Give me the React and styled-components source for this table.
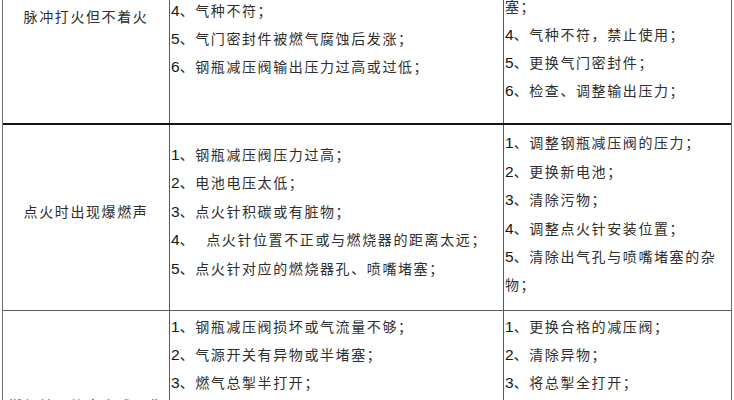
import React from 'react'
import styled, { createGlobalStyle } from 'styled-components'

const GlobalStyle = createGlobalStyle`
  html, body {
    margin: 0;
    padding: 0;
    background: #fff;
    overflow: hidden;
  }
  body {
    font-family: "Liberation Sans", "Noto Sans CJK SC", sans-serif;
  }
`

const rows = [
  {
    fault: '脉冲打火但不着火',
    faultTop: 4,
    causeShift: -3,
    fixShift: -6,
    lineHeight: 27,
    causes: ['4、气种不符；', '5、气门密封件被燃气腐蚀后发涨；', '6、钢瓶减压阀输出压力过高或过低；'],
    fixes: ['塞；', '4、气种不符，禁止使用；', '5、更换气门密封件；', '6、检查、调整输出压力；'],
    height: 123,
    border: 'thick',
  },
  {
    fault: '点火时出现爆燃声',
    centered: true,
    causeShift: 0,
    fixShift: 4,
    lineHeight: 27.5,
    causes: [
      '1、钢瓶减压阀压力过高；',
      '2、电池电压太低；',
      '3、点火针积碳或有脏物；',
      '4、\u00a0\u00a0点火针位置不正或与燃烧器的距离太远；',
      '5、点火针对应的燃烧器孔、喷嘴堵塞；',
    ],
    fixes: [
      '1、调整钢瓶减压阀的压力；',
      '2、更换新电池；',
      '3、清除污物；',
      '4、调整点火针安装位置；',
      '5、清除出气孔与喷嘴堵塞的杂',
      '物；',
    ],
    height: 185,
    border: 'thin',
  },
  {
    fault: '燃气灶火焰太小或不稳',
    faultTop: 82,
    causeShift: 2,
    fixShift: 2,
    lineHeight: 27,
    causes: ['1、钢瓶减压阀损坏或气流量不够；', '2、气源开关有异物或半堵塞；', '3、燃气总掣半打开；'],
    fixes: ['1、更换合格的减压阀；', '2、清除异物；', '3、将总掣全打开；'],
    height: 120,
    border: 'none',
  },
]

// split a leading item number off so it can be drawn like the document's Arial digits
function renderLine(text) {
  const m = text.match(/^(\d)(.*)$/)
  if (!m) return text
  return (
    <>
      <Num>{m[1]}</Num>
      {m[2]}
    </>
  )
}

export default function App() {
  return (
    <>
      <GlobalStyle />
      <Table>
        {rows.map((row, i) => (
          <Row key={i} $height={row.height} $border={row.border}>
            <FaultCell $centered={row.centered} $top={row.faultTop}>
              <span>{row.fault}</span>
            </FaultCell>
            <TextCell $centered={row.centered} $shift={row.causeShift} $lh={row.lineHeight} $divider>
              <div>
                {row.causes.map((c, j) => (
                  <Line key={j}>{renderLine(c)}</Line>
                ))}
              </div>
            </TextCell>
            <TextCell $centered={row.centered} $shift={row.fixShift} $lh={row.lineHeight}>
              <div>
                {row.fixes.map((c, j) => (
                  <Line key={j}>{renderLine(c)}</Line>
                ))}
              </div>
            </TextCell>
          </Row>
        ))}
      </Table>
    </>
  )
}

const Table = styled.div`
  margin-left: 2px;
  width: 728px;
  border-left: 1px solid #6f6f6f;
  border-right: 1px solid #6f6f6f;
  color: #2e2e2e;
  font-size: 14px;
  letter-spacing: 1.6px;
`

const Row = styled.div`
  display: grid;
  grid-template-columns: 167px 334px 227px;
  height: ${p => p.$height}px;
  overflow: hidden;
  border-bottom: ${p =>
    p.$border === 'thick' ? '2px solid #151515' : p.$border === 'thin' ? '1px solid #5e5e5e' : 'none'};
`

const FaultCell = styled.div`
  border-right: 1px solid #5a5a5a;
  display: flex;
  justify-content: center;
  align-items: ${p => (p.$centered ? 'center' : 'flex-start')};
  padding-top: ${p => (p.$centered ? 0 : p.$top)}px;
  padding-bottom: ${p => (p.$centered ? 16 : 0)}px;
  line-height: 27px;
  white-space: nowrap;
  box-sizing: border-box;
`

const TextCell = styled.div`
  border-right: ${p => (p.$divider ? '1px solid #5a5a5a' : 'none')};
  display: flex;
  flex-direction: column;
  justify-content: ${p => (p.$centered ? 'center' : 'flex-start')};
  padding-left: 1px;
  padding-bottom: ${p => (p.$centered ? 16 : 0)}px;
  line-height: ${p => p.$lh}px;
  white-space: nowrap;
  box-sizing: border-box;

  & > div {
    margin-top: ${p => p.$shift}px;
  }
`

const Line = styled.div``

const Num = styled.span`
  font-family: "Liberation Sans", Arial, sans-serif;
  font-size: 15.5px;
  color: #151515;
  letter-spacing: 0;
`
